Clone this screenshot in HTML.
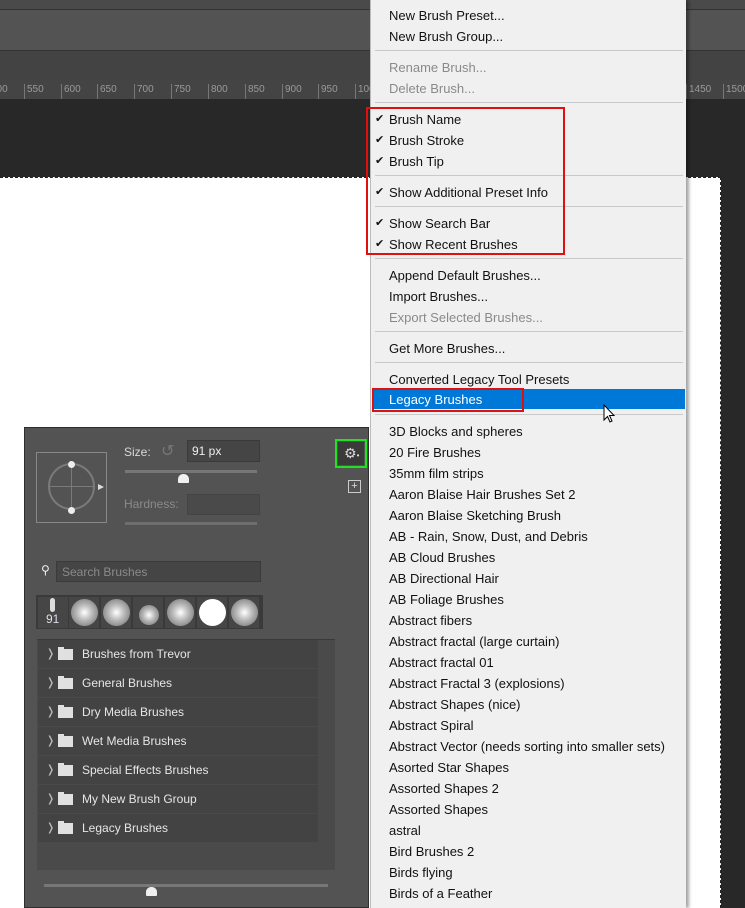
<!DOCTYPE html>
<html><head><meta charset="utf-8"><style>
*{margin:0;padding:0;box-sizing:border-box}
body{width:745px;height:908px;overflow:hidden;background:#282828;position:relative;font-family:"Liberation Sans","DejaVu Sans",sans-serif}
.a{position:absolute}
.rl{position:absolute;top:84px;font-size:10px;color:#9a9a9a;border-left:1px solid #777;padding-left:2px;height:15px}
.menu{position:absolute;left:370px;top:0;width:316px;height:908px;background:#f0f0f0;box-shadow:3px 0 3px rgba(0,0,0,.35);border-left:1px solid #bbb}
.mi{position:absolute;left:18px;font-size:13px;color:#111;height:21px;line-height:23px;white-space:nowrap}
.dis{color:#8a8a8a}
.sep{position:absolute;left:4px;width:308px;height:1px;background:#c9c9c9}
.ck{position:absolute;left:-14px;font-size:11px}
.pt{color:#d8d8d8;font-size:12px;position:absolute}
.row{position:absolute;left:38px;width:280px;height:28px;background:#434343;color:#e6e6e6;font-size:12px;line-height:28px}
.row .ch{position:absolute;left:8px;color:#bbb;font-size:11px}
.row .fd{position:absolute;left:20px;top:9px;width:15px;height:11px;background:#e0e0e0}
.row .fd:before{content:"";position:absolute;left:0;top:-2px;width:6px;height:2px;background:#e0e0e0}
.row span.t{position:absolute;left:44px}
.th{position:absolute;top:597px;width:30px;height:31px;background:#464646}
.th i{position:absolute;left:2px;top:2px;width:27px;height:27px;border-radius:50%;background:radial-gradient(circle,#fff 0%,#bbb 40%,#666 100%)}
</style></head><body>
<div class="a" style="left:0;top:0;width:745px;height:9px;background:#4a4a4a"></div>
<div class="a" style="left:0;top:9px;width:745px;height:1px;background:#333"></div>
<div class="a" style="left:0;top:10px;width:745px;height:40px;background:#535353"></div>
<div class="a" style="left:0;top:50px;width:745px;height:1px;background:#333"></div>
<div class="a" style="left:0;top:51px;width:745px;height:29px;background:#434343"></div>
<div class="a" style="left:0;top:80px;width:745px;height:19px;background:#444"></div>
<div class="rl" style="left:-12px">500</div><div class="rl" style="left:24px">550</div><div class="rl" style="left:61px">600</div><div class="rl" style="left:97px">650</div><div class="rl" style="left:134px">700</div><div class="rl" style="left:171px">750</div><div class="rl" style="left:208px">800</div><div class="rl" style="left:245px">850</div><div class="rl" style="left:282px">900</div><div class="rl" style="left:318px">950</div><div class="rl" style="left:355px">1000</div><div class="rl" style="left:686px">1450</div><div class="rl" style="left:723px">1500</div>
<div class="a" style="left:0;top:177px;width:721px;height:731px;background:#fff;border-top:1px dashed #222;border-right:1px dashed #222"></div>

<div class="a" style="left:24px;top:427px;width:345px;height:481px;background:#535353;border:1px solid #2e2e2e"></div>
<div class="a" style="left:36px;top:452px;width:71px;height:71px;border:1px solid #888"></div>
<div class="a" style="left:48px;top:463px;width:47px;height:47px;border:2px solid #7a7a7a;border-radius:50%"></div>
<div class="a" style="left:71px;top:464px;width:1px;height:46px;background:#7a7a7a"></div>
<div class="a" style="left:48px;top:486px;width:47px;height:1px;background:#7a7a7a"></div>
<div class="a" style="left:68px;top:461px;width:7px;height:7px;border-radius:50%;background:#eee"></div>
<div class="a" style="left:68px;top:507px;width:7px;height:7px;border-radius:50%;background:#eee"></div>
<div class="a" style="left:98px;top:484px;width:0;height:0;border-left:6px solid #ddd;border-top:3px solid transparent;border-bottom:3px solid transparent"></div>
<div class="pt" style="left:124px;top:445px">Size:</div>
<div class="a" style="left:161px;top:441px;color:#777;font-size:16px">&#x21BA;</div>
<div class="a" style="left:187px;top:440px;width:73px;height:22px;background:#454545;border:1px solid #3a3a3a;color:#eee;font-size:12px;padding:3px 4px">91 px</div>
<div class="a" style="left:125px;top:470px;width:132px;height:3px;background:#777"></div>
<div class="a" style="left:178px;top:474px;width:11px;height:9px;background:#f0f0f0;border-radius:5px 5px 1px 1px"></div>
<div class="pt" style="left:124px;top:497px;color:#8a8a8a">Hardness:</div>
<div class="a" style="left:187px;top:494px;width:73px;height:21px;background:#4a4a4a;border:1px solid #444"></div>
<div class="a" style="left:125px;top:522px;width:132px;height:3px;background:#6e6e6e"></div>
<div class="a" style="left:335px;top:439px;width:32px;height:29px;border:2px solid #22e022"></div>
<div class="a" style="left:338px;top:442px;width:26px;height:23px;background:#3a3a3a;color:#ddd;font-size:14px;line-height:22px;padding-left:6px">&#9881;<span style="font-size:8px">&#8226;</span></div>
<div class="a" style="left:348px;top:480px;width:13px;height:13px;border:1px solid #ccc;color:#ddd;font-size:11px;line-height:10px;text-align:center">+</div>
<div class="a" style="left:41px;top:563px;color:#eee;font-size:12px">&#9906;</div>
<div class="a" style="left:56px;top:561px;width:205px;height:21px;background:#454545;border:1px solid #3a3a3a;color:#8a8a8a;font-size:12px;padding:3px 5px">Search Brushes</div>
<div class="a" style="left:36px;top:595px;width:227px;height:34px;background:#3a3a3a"></div>
<div class="th" style="left:38px"><span style="position:absolute;left:12px;top:1px;width:5px;height:14px;background:#ddd;border-radius:3px"></span><span style="position:absolute;left:8px;top:15px;color:#dde;font-size:12px">91</span></div>
<div class="th" style="left:69px"><i></i></div>
<div class="th" style="left:101px"><i></i></div>
<div class="th" style="left:133px"><i style="left:6px;top:8px;width:20px;height:20px"></i></div>
<div class="th" style="left:165px"><i></i></div>
<div class="th" style="left:197px"><i style="background:#fff;left:2px;top:2px;width:27px;height:27px"></i></div>
<div class="th" style="left:229px"><i></i></div>
<div class="a" style="left:37px;top:639px;width:298px;height:231px;background:#4a4a4a;border-top:1px solid #3a3a3a"></div>
<div class="row" style="top:640px"><span class="ch">&#x276D;</span><i class="fd"></i><span class="t">Brushes from Trevor</span></div>
<div class="row" style="top:669px"><span class="ch">&#x276D;</span><i class="fd"></i><span class="t">General Brushes</span></div>
<div class="row" style="top:698px"><span class="ch">&#x276D;</span><i class="fd"></i><span class="t">Dry Media Brushes</span></div>
<div class="row" style="top:727px"><span class="ch">&#x276D;</span><i class="fd"></i><span class="t">Wet Media Brushes</span></div>
<div class="row" style="top:756px"><span class="ch">&#x276D;</span><i class="fd"></i><span class="t">Special Effects Brushes</span></div>
<div class="row" style="top:785px"><span class="ch">&#x276D;</span><i class="fd"></i><span class="t">My New Brush Group</span></div>
<div class="row" style="top:814px"><span class="ch">&#x276D;</span><i class="fd"></i><span class="t">Legacy Brushes</span></div>
<div class="a" style="left:44px;top:884px;width:284px;height:3px;background:#777"></div>
<div class="a" style="left:146px;top:887px;width:11px;height:9px;background:#f0f0f0;border-radius:5px 5px 1px 1px"></div>

<div class="menu">
<div class="mi" style="top:4px">New Brush Preset...</div>
<div class="mi" style="top:25px">New Brush Group...</div>
<div class="sep" style="top:50px"></div>
<div class="mi dis" style="top:56px">Rename Brush...</div>
<div class="mi dis" style="top:77px">Delete Brush...</div>
<div class="sep" style="top:102px"></div>
<div class="mi" style="top:108px"><span class="ck">&#10004;</span>Brush Name</div>
<div class="mi" style="top:129px"><span class="ck">&#10004;</span>Brush Stroke</div>
<div class="mi" style="top:150px"><span class="ck">&#10004;</span>Brush Tip</div>
<div class="sep" style="top:175px"></div>
<div class="mi" style="top:181px"><span class="ck">&#10004;</span>Show Additional Preset Info</div>
<div class="sep" style="top:206px"></div>
<div class="mi" style="top:212px"><span class="ck">&#10004;</span>Show Search Bar</div>
<div class="mi" style="top:233px"><span class="ck">&#10004;</span>Show Recent Brushes</div>
<div class="sep" style="top:258px"></div>
<div class="mi" style="top:264px">Append Default Brushes...</div>
<div class="mi" style="top:285px">Import Brushes...</div>
<div class="mi dis" style="top:306px">Export Selected Brushes...</div>
<div class="sep" style="top:331px"></div>
<div class="mi" style="top:337px">Get More Brushes...</div>
<div class="sep" style="top:362px"></div>
<div class="mi" style="top:368px">Converted Legacy Tool Presets</div>
<div class="a" style="left:2px;top:389px;width:312px;height:20px;background:#0078d7"></div>
<div class="mi" style="top:388px;color:#fff">Legacy Brushes</div>
<div class="sep" style="top:414px"></div>
<div class="mi" style="top:420px">3D Blocks and spheres</div>
<div class="mi" style="top:441px">20 Fire Brushes</div>
<div class="mi" style="top:462px">35mm film strips</div>
<div class="mi" style="top:483px">Aaron Blaise Hair Brushes Set 2</div>
<div class="mi" style="top:504px">Aaron Blaise Sketching Brush</div>
<div class="mi" style="top:525px">AB - Rain, Snow, Dust, and Debris</div>
<div class="mi" style="top:546px">AB Cloud Brushes</div>
<div class="mi" style="top:567px">AB Directional Hair</div>
<div class="mi" style="top:588px">AB Foliage Brushes</div>
<div class="mi" style="top:609px">Abstract fibers</div>
<div class="mi" style="top:630px">Abstract fractal (large curtain)</div>
<div class="mi" style="top:651px">Abstract fractal 01</div>
<div class="mi" style="top:672px">Abstract Fractal 3 (explosions)</div>
<div class="mi" style="top:693px">Abstract Shapes (nice)</div>
<div class="mi" style="top:714px">Abstract Spiral</div>
<div class="mi" style="top:735px">Abstract Vector (needs sorting into smaller sets)</div>
<div class="mi" style="top:756px">Asorted Star Shapes</div>
<div class="mi" style="top:777px">Assorted Shapes 2</div>
<div class="mi" style="top:798px">Assorted Shapes</div>
<div class="mi" style="top:819px">astral</div>
<div class="mi" style="top:840px">Bird Brushes 2</div>
<div class="mi" style="top:861px">Birds flying</div>
<div class="mi" style="top:882px">Birds of a Feather</div>
</div>
<div class="a" style="left:366px;top:107px;width:199px;height:148px;border:2px solid #e01010"></div>
<div class="a" style="left:372px;top:388px;width:152px;height:24px;border:2px solid #e01010"></div>
<svg class="a" style="left:603px;top:404px" width="14" height="20" viewBox="0 0 14 20"><path d="M1 1 L1 16 L4.5 12.5 L7 18 L9 17 L6.5 11.5 L11 11.5 Z" fill="#fff" stroke="#000" stroke-width="1"/></svg>
</body></html>
